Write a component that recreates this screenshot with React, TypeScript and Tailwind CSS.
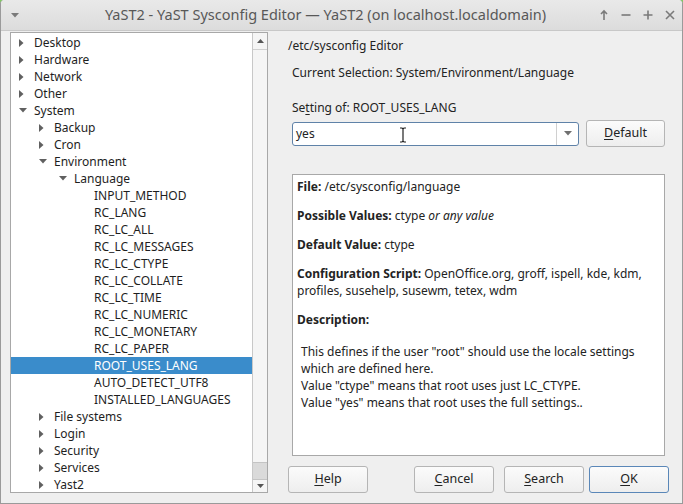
import React from 'react';

type Row = { label: string; depth: number; arrow?: 'right' | 'down'; selected?: boolean };

const rows: Row[] = [
  { label: 'Desktop', depth: 0, arrow: 'right' },
  { label: 'Hardware', depth: 0, arrow: 'right' },
  { label: 'Network', depth: 0, arrow: 'right' },
  { label: 'Other', depth: 0, arrow: 'right' },
  { label: 'System', depth: 0, arrow: 'down' },
  { label: 'Backup', depth: 1, arrow: 'right' },
  { label: 'Cron', depth: 1, arrow: 'right' },
  { label: 'Environment', depth: 1, arrow: 'down' },
  { label: 'Language', depth: 2, arrow: 'down' },
  { label: 'INPUT_METHOD', depth: 3 },
  { label: 'RC_LANG', depth: 3 },
  { label: 'RC_LC_ALL', depth: 3 },
  { label: 'RC_LC_MESSAGES', depth: 3 },
  { label: 'RC_LC_CTYPE', depth: 3 },
  { label: 'RC_LC_COLLATE', depth: 3 },
  { label: 'RC_LC_TIME', depth: 3 },
  { label: 'RC_LC_NUMERIC', depth: 3 },
  { label: 'RC_LC_MONETARY', depth: 3 },
  { label: 'RC_LC_PAPER', depth: 3 },
  { label: 'ROOT_USES_LANG', depth: 3, selected: true },
  { label: 'AUTO_DETECT_UTF8', depth: 3 },
  { label: 'INSTALLED_LANGUAGES', depth: 3 },
  { label: 'File systems', depth: 1, arrow: 'right' },
  { label: 'Login', depth: 1, arrow: 'right' },
  { label: 'Security', depth: 1, arrow: 'right' },
  { label: 'Services', depth: 1, arrow: 'right' },
  { label: 'Yast2', depth: 1, arrow: 'right' },
];

const indent = ['pl-[7px]', 'pl-[27px]', 'pl-[47px]', 'pl-[67px]'];

const Arrow = ({ dir }: { dir?: 'right' | 'down' }) => (
  <span className="w-[16px] h-[17px] flex items-center justify-start pl-[1px] shrink-0">
    {dir === 'right' && (
      <svg width="5" height="8" viewBox="0 0 5 8"><path d="M0 0 L4.5 4 L0 8 Z" fill="#606060" /></svg>
    )}
    {dir === 'down' && (
      <svg width="8" height="5" viewBox="0 0 8 5"><path d="M0 0 L8 0 L4 4.5 Z" fill="#606060" /></svg>
    )}
  </span>
);

const Btn = ({ pre, u, post, w, primary }: { pre?: string; u: string; post?: string; w: string; primary?: boolean }) => (
  <div
    className={`${w} h-[27px] rounded-[3px] border flex items-center justify-center text-[12.5px] text-[#232323] bg-gradient-to-b from-[#fbfbfb] to-[#eeeeee] ${
      primary ? 'border-[#5a87b8]' : 'border-[#b5b5b5]'
    }`}
  >
    {pre}
    <span className="underline underline-offset-2">{u}</span>
    {post}
  </div>
);

export default function App() {
  return (
    <div className="w-[683px] h-[504px] bg-[#7fcf5f] overflow-hidden" style={{ fontFamily: '"Noto Sans", sans-serif' }}>
      <div className="w-full h-full rounded-t-[4px] bg-[#efefef] flex flex-col border-x border-b border-[#9a9a9a]">
        {/* title bar */}
        <div className="h-[31px] shrink-0 flex items-center bg-gradient-to-b from-[#e9e9e9] to-[#dcdcdc] border-b border-[#c8c8c8] rounded-t-[4px] relative">
          <div className="w-[28px] flex justify-center">
            <svg width="8" height="5" viewBox="0 0 8 5"><path d="M0 0 L8 0 L4 4.5 Z" fill="#7a7a7a" /></svg>
          </div>
          <div className="flex-1 text-center text-[14.5px] text-[#585858] pr-[60px]">
            YaST2 - YaST Sysconfig Editor — YaST2 (on localhost.localdomain)
          </div>
          <div className="absolute right-[6px] top-0 h-full flex items-center gap-[10px] text-[#7a7a7a]">
            <svg width="12" height="12" viewBox="0 0 12 12"><path d="M6 11 V2 M3 5 L6 2 L9 5" stroke="#7a7a7a" strokeWidth="1.6" fill="none" /></svg>
            <svg width="12" height="12" viewBox="0 0 12 12"><path d="M1.5 6 H10.5" stroke="#7a7a7a" strokeWidth="1.6" /></svg>
            <svg width="12" height="12" viewBox="0 0 12 12"><path d="M1.5 6 H10.5 M6 1.5 V10.5" stroke="#7a7a7a" strokeWidth="1.6" /></svg>
            <svg width="12" height="12" viewBox="0 0 12 12"><path d="M2 2 L10 10 M10 2 L2 10" stroke="#7a7a7a" strokeWidth="1.6" /></svg>
          </div>
        </div>

        {/* body */}
        <div className="flex pt-[1px] pl-[9px]">
          {/* tree */}
          <div className="w-[258px] h-[461px] border border-[#a8a8a8] bg-white flex">
            <div className="flex-1 overflow-hidden pt-[1px]">
              {rows.map((r, i) => (
                <div
                  key={i}
                  className={`h-[17px] flex items-center text-[12px] leading-[17px] ${indent[r.depth]} ${
                    r.selected ? 'bg-[#3a8ccb] text-white' : 'text-[#1e1e1e]'
                  }`}
                >
                  <Arrow dir={r.arrow} />
                  <span className="whitespace-nowrap">{r.label}</span>
                </div>
              ))}
            </div>
            {/* scrollbar */}
            <div className="w-[15px] border-l border-[#c8c8c8] bg-[#f5f5f5] flex flex-col">
              <div className="h-[17px] flex items-center justify-center border-b border-[#d0d0d0]">
                <svg width="7" height="4" viewBox="0 0 7 4"><path d="M0 4 L7 4 L3.5 0 Z" fill="#555" /></svg>
              </div>
              <div className="flex-1" />
              <div className="h-[18px] bg-[#dadada] border-y border-[#c4c4c4]" />
              <div className="h-[12px] flex items-center justify-center">
                <svg width="7" height="4" viewBox="0 0 7 4"><path d="M0 0 L7 0 L3.5 4 Z" fill="#555" /></svg>
              </div>
            </div>
          </div>

          {/* right side */}
          <div className="w-[381px] ml-[20px] flex flex-col text-[12px] text-[#232323]">
            <div className="mt-[5px] h-[17px] leading-[17px]">/etc/sysconfig Editor</div>
            <div className="mt-[10px] ml-[4px] h-[17px] leading-[17px]">Current Selection: System/Environment/Language</div>
            <div className="mt-[18px] ml-[4px] h-[17px] leading-[17px]">
              Se<span className="underline underline-offset-2">t</span>ting of: ROOT_USES_LANG
            </div>
            <div className="mt-[4px] ml-[4px] flex items-center">
              <div className="w-[287px] h-[24px] rounded-[3px] border border-[#5f82a8] bg-white flex items-center relative">
                <span className="pl-[3px] flex-1">yes</span>
                <svg className="absolute left-[106px] top-[4px]" width="8" height="16" viewBox="0 0 8 16">
                  <path d="M1 1 H3 L4 2 L5 1 H7 M4 2 V14 M1 15 H3 L4 14 L5 15 H7" stroke="#222" strokeWidth="1.2" fill="none" />
                </svg>
                <div className="w-[22px] h-full border-l border-[#d0d0d0] flex items-center justify-center">
                  <svg width="8" height="5" viewBox="0 0 8 5"><path d="M0 0 L8 0 L4 4.5 Z" fill="#707070" /></svg>
                </div>
              </div>
              <div className="ml-[7px]">
                <Btn u="D" post="efault" w="w-[79px]" />
              </div>
            </div>
            <div className="mt-[27px] ml-[4px] w-[373px] h-[282px] border border-[#a8a8a8] bg-white px-[4px] pt-[3px] leading-[17px]">
              <p><b>File:</b> /etc/sysconfig/language</p>
              <p className="mt-[12px]"><b>Possible Values:</b> ctype <i>or any value</i></p>
              <p className="mt-[12px]"><b>Default Value:</b> ctype</p>
              <p className="mt-[12px]">
                <b>Configuration Script:</b> OpenOffice.org, groff, ispell, kde, kdm,<br />
                profiles, susehelp, susewm, tetex, wdm
              </p>
              <p className="mt-[12px]"><b>Description:</b></p>
              <div className="mt-[15px] pl-[4px]">
                <div>This defines if the user "root" should use the locale settings</div>
                <div>which are defined here.</div>
                <div>Value "ctype" means that root uses just LC_CTYPE.</div>
                <div>Value "yes" means that root uses the full settings..</div>
              </div>
            </div>
            <div className="mt-[10px] flex items-center">
              <Btn u="H" post="elp" w="w-[80px]" />
              <div className="ml-[46px]"><Btn u="C" post="ancel" w="w-[80px]" /></div>
              <div className="ml-[10px]"><Btn u="S" post="earch" w="w-[80px]" /></div>
              <div className="ml-[5px]"><Btn u="O" post="K" w="w-[80px]" primary /></div>
            </div>
          </div>
        </div>
      </div>
    </div>
  );
}
